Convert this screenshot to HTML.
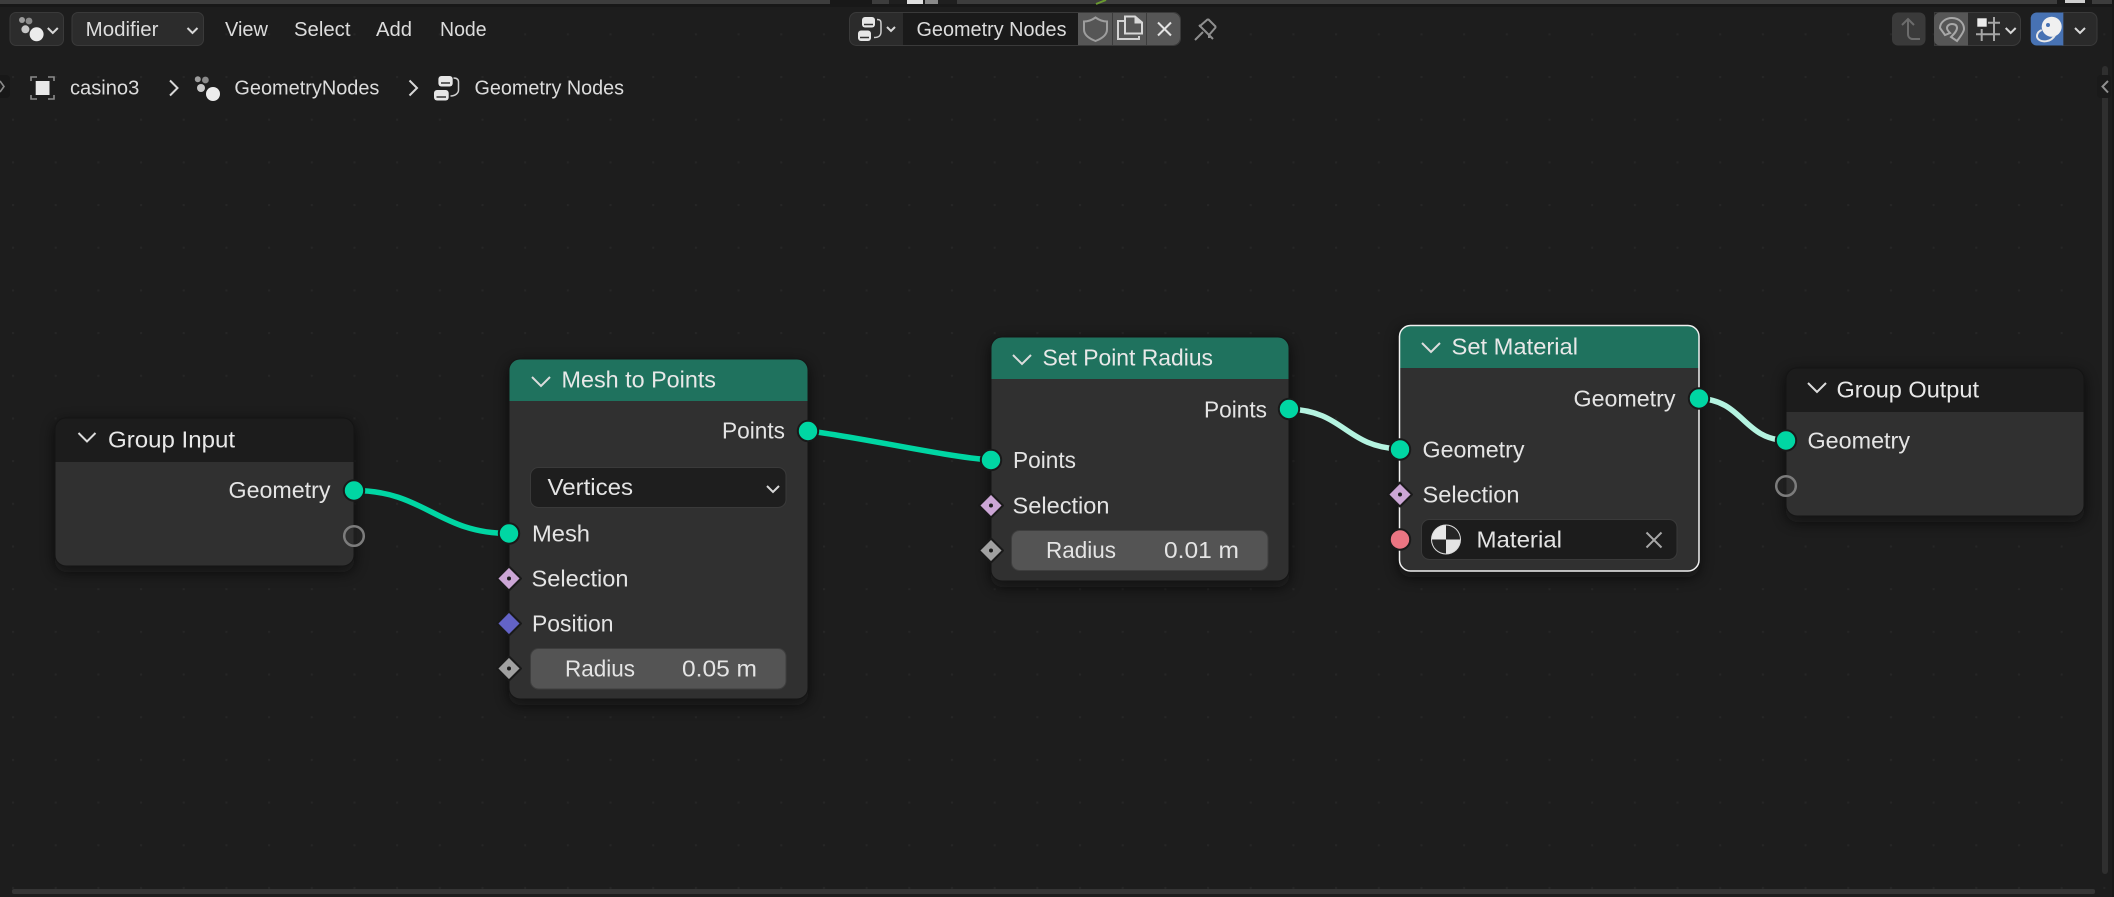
<!DOCTYPE html>
<html><head><meta charset="utf-8"><style>
html,body{margin:0;padding:0;background:#1d1d1d;width:2114px;height:897px;overflow:hidden}
svg{display:block}
text{font-family:"Liberation Sans",sans-serif;fill:#e4e4e4}
.n{font-size:23px}
.t{font-size:23px;fill:#e8e8e8}
.g{font-size:20px;fill:#dcdcdc}
.h{fill:none;stroke:#dcdcdc;stroke-width:2}
.s{fill:#00d6a3;stroke:#191919;stroke-width:2}
.r{fill:#303030;fill-opacity:.35;stroke:#7c7c7c;stroke-width:2.5}
.d{stroke:#191919;stroke-width:2;stroke-linejoin:round}
.i{fill:none;stroke:#d8d8d8;stroke-width:2}
</style></head><body>
<svg width="2114" height="897" viewBox="0 0 2114 897" xmlns="http://www.w3.org/2000/svg">
<defs>
<pattern id="dots" x="12" y="76" width="42.68" height="42.68" patternUnits="userSpaceOnUse"><rect width="2" height="2" fill="#262626"/></pattern>
<filter id="sh" x="-20%" y="-20%" width="140%" height="140%"><feGaussianBlur stdDeviation="7"/></filter>
<clipPath id="c1"><rect x="55" y="418" width="299" height="148" rx="11"/></clipPath>
<clipPath id="c2"><rect x="509" y="359" width="299" height="340" rx="11"/></clipPath>
<clipPath id="c3"><rect x="991" y="337" width="298" height="244" rx="11"/></clipPath>
<clipPath id="c4"><rect x="1399" y="325" width="300" height="246" rx="11"/></clipPath>
<clipPath id="c5"><rect x="1786" y="368" width="298" height="148" rx="11"/></clipPath>
<clipPath id="mat"><circle cx="1446" cy="539.5" r="14"/></clipPath>
</defs>
<rect width="2114" height="897" fill="#1d1d1d"/>
<rect width="2114" height="897" fill="url(#dots)"/>
<!-- top strip -->
<rect x="0" y="0" width="2114" height="4" fill="#3d3d3d"/>
<rect x="0" y="4" width="2114" height="3" fill="#181818"/>
<rect x="830" y="0" width="42" height="4" fill="#181818"/>
<rect x="889" y="0" width="68" height="4" fill="#1f1f1f"/>
<rect x="907" y="0" width="16" height="4" fill="#e0e0e0"/>
<rect x="925" y="0" width="13" height="4" fill="#8a8a8a"/>
<path d="M1096 4 L1106 0" stroke="#6a9a30" stroke-width="2"/>
<rect x="2057" y="0" width="35" height="4" fill="#1a1a1a"/>
<rect x="2065" y="0" width="20" height="3" fill="#cfcfcf"/>
<rect x="2112" y="0" width="2" height="897" fill="#181818"/>
<!-- header left -->
<rect x="10" y="12.5" width="53.500" height="33" rx="6" fill="#2c2c2c" stroke="#3a3a3a"/>
<circle cx="29" cy="21" r="3.400" fill="#8a8a8a"/><circle cx="22" cy="20" r="3" fill="#9c9c9c"/><circle cx="25.400" cy="29.300" r="4" fill="#c8c8c8"/><circle cx="36.600" cy="34.300" r="7" fill="#ececec"/>
<path d="M47.800 28l5 5 5-5" class="i"/>
<rect x="72" y="12.5" width="131.500" height="33" rx="6" fill="#2c2c2c" stroke="#3a3a3a"/>
<text class="g" x="85.700" y="36" textLength="72.800" lengthAdjust="spacingAndGlyphs">Modifier</text>
<path d="M187.500 28l5 5 5-5" class="i"/>
<text class="g" x="225" y="36" textLength="43" lengthAdjust="spacingAndGlyphs">View</text>
<text class="g" x="294" y="36" textLength="56.500" lengthAdjust="spacingAndGlyphs">Select</text>
<text class="g" x="376" y="36" textLength="36" lengthAdjust="spacingAndGlyphs">Add</text>
<text class="g" x="440" y="36" textLength="46.600" lengthAdjust="spacingAndGlyphs">Node</text>
<!-- center group -->
<rect x="849.5" y="12.5" width="331" height="33" rx="7" fill="#2b2b2b" stroke="#3a3a3a"/>
<rect x="903" y="13" width="175" height="32" fill="#1a1a1a"/>
<path d="M1078 13h95a7 7 0 0 1 7 7v18a7 7 0 0 1-7 7h-95z" fill="#565656"/>
<path d="M1112.5 13v32M1146.5 13v32" stroke="#3c3c3c" stroke-width="1"/>
<g fill="#e6e6e6"><rect x="862" y="17" width="13" height="10.5" rx="3"/><rect x="858" y="30.5" width="13" height="10.5" rx="3"/></g>
<path d="M864 24.5h9M860 37.5h9" stroke="#333" stroke-width="1.5"/>
<path d="M877 19.5c4 0 4 2 4 5v7c0 4-2 6-7 6" fill="none" stroke="#cfcfcf" stroke-width="1.5"/>
<path d="M887 27l4 4 4-4" class="i"/>
<text class="g" x="916.5" y="36" textLength="150" lengthAdjust="spacingAndGlyphs">Geometry Nodes</text>
<path d="M1084 21.5c4 0 8-1.500 11.500-4 3.500 2.500 7.500 4 11.500 4v8c0 5-5 9-11.500 11.500-6.500-2.500-11.500-6.500-11.500-11.500z" fill="none" stroke="#9e9e9e" stroke-width="2"/>
<path d="M1125 21h-7v18h21v-3" fill="none" stroke="#d2d2d2" stroke-width="2"/>
<path d="M1125 33.500v-17h10l7 6v11z" fill="none" stroke="#d8d8d8" stroke-width="2"/>
<path d="M1135 17v6h7" fill="#d8d8d8" stroke="#d8d8d8" stroke-width="1"/>
<path d="M1158 22.500l13 13M1171 22.500l-13 13" stroke="#e2e2e2" stroke-width="2"/>
<path d="M1195 40l8-8M1199 25l14 14M1208 19l8 8M1208 19l-8 7-1 0M1216 27l-7 8 0 3" fill="none" stroke="#8f8f8f" stroke-width="2"/>
<!-- header right -->
<rect x="1892" y="12.500" width="33.500" height="33" rx="6" fill="#3a3a3a"/>
<path d="M1902 25l6-6 6 6M1908 19v15c0 3 2 5 5 5h7" fill="none" stroke="#6c6c6c" stroke-width="2"/>
<path d="M1934.500 12.500h78a8 8 0 0 1 8 8v17a8 8 0 0 1-8 8h-78z" fill="#2a2a2a" stroke="#3a3a3a"/>
<path d="M1968 12.500h-28a6 6 0 0 0-6 6v21a6 6 0 0 0 6 6h28z" fill="#565656"/>
<path d="M1940 28C1940 22 1946 18 1952 18C1960 18 1964 24 1964 29C1964 32 1960 37 1957 41L1951 37C1954 34 1957 31 1957 28C1957 25 1955 24 1952 24C1949 24 1947 26 1947 28C1947 30 1950 33 1950 33L1945 35Z" fill="none" stroke="#a8a8a8" stroke-width="2"/>
<rect x="1977.300" y="18.300" width="9.400" height="8.400" fill="#ececec"/>
<path d="M1981.700 29v12M1994 17v24M1988 22.700h12M1976 34.300h24" stroke="#a6a6a6" stroke-width="2" fill="none"/>
<path d="M2005.700 28l5 5 5-5" class="i"/>
<path d="M2063 12.500h27a7 7 0 0 1 7 7v19a7 7 0 0 1-7 7h-27z" fill="#2a2a2a" stroke="#3a3a3a"/>
<path d="M2063.300 12.500h-26.600a6 6 0 0 0-6 6v21a6 6 0 0 0 6 6h26.600z" fill="#4772b3"/>
<circle cx="2051.700" cy="26.700" r="10" fill="#f0f0f0"/>
<circle cx="2048" cy="25" r="2" fill="#4772b3"/>
<path d="M2041.700 30c-5 2-6 7-3 9.500s12 3.500 16.500-4.500" fill="none" stroke="#e8e8e8" stroke-width="2"/>
<path d="M2075 28l5 5 5-5" class="i"/>
<!-- breadcrumbs -->
<rect x="-4" y="75" width="14" height="23" rx="4" fill="#181818"/>
<path d="M0 81l4 5.500-4 5.500" fill="none" stroke="#8a8a8a" stroke-width="1.600"/>
<path d="M31 81v-4h6M48 77h6v4M54 95v4h-6M37 99h-6v-4" fill="none" stroke="#8c8c8c" stroke-width="1.600"/>
<rect x="35.700" y="81" width="13.800" height="14" fill="#e8e8e8"/>
<text class="g" x="70" y="94.500" textLength="69.300" lengthAdjust="spacingAndGlyphs">casino3</text>
<path d="M170 80.500l7.500 7.500-7.500 7.500" class="i"/>
<circle cx="205.400" cy="80" r="3.400" fill="#8a8a8a"/><circle cx="197.800" cy="79.300" r="3" fill="#9c9c9c"/><circle cx="201" cy="88" r="4" fill="#c8c8c8"/><circle cx="213" cy="94" r="7" fill="#ececec"/>
<text class="g" x="234.400" y="94.500" textLength="145" lengthAdjust="spacingAndGlyphs">GeometryNodes</text>
<path d="M409.500 80.500l7.500 7.500-7.500 7.500" class="i"/>
<g fill="#e6e6e6"><rect x="438.400" y="76" width="14.300" height="10.500" rx="3"/><rect x="434" y="90" width="14.700" height="10.500" rx="3"/></g>
<path d="M441 83h9M436.500 97h9.500" stroke="#333" stroke-width="1.500"/>
<path d="M453.500 78c4 0 5 2 5 4v8c0 3-3 6-8 6" fill="none" stroke="#cfcfcf" stroke-width="1.500"/>
<text class="g" x="474.500" y="94.500" textLength="149.500" lengthAdjust="spacingAndGlyphs">Geometry Nodes</text>
<!-- scrollbars -->
<rect x="2102" y="66" width="6" height="808" rx="3" fill="#2f2f2f"/>
<rect x="12" y="889" width="2083" height="5" rx="2" fill="#353535"/>
<rect x="2097" y="75" width="14" height="23" rx="4" fill="#1a1a1a"/>
<path d="M2108 81l-5.500 5.500 5.500 6" fill="none" stroke="#8f8f8f" stroke-width="2"/>
<!-- shadows -->
<g fill="#0c0c0c" filter="url(#sh)" opacity=".7">
<rect x="55" y="422" width="299" height="150" rx="11"/>
<rect x="509" y="363" width="299" height="342" rx="11"/>
<rect x="991" y="341" width="298" height="246" rx="11"/>
<rect x="1399" y="329" width="300" height="248" rx="11"/>
<rect x="1786" y="372" width="298" height="150" rx="11"/>
</g>
<!-- Group Input -->
<g clip-path="url(#c1)"><rect x="55" y="418" width="299" height="148" fill="#303030"/><rect x="55" y="418" width="299" height="44" fill="#1c1c1c"/></g>
<rect x="55" y="418" width="299" height="148" rx="11" fill="none" stroke="#151515" stroke-width="1"/>
<path d="M78.500 433l8.500 8.500 8.500-8.500" class="h"/>
<text class="t" x="108" y="447.500" textLength="127" lengthAdjust="spacingAndGlyphs">Group Input</text>
<text class="n" x="228.500" y="498" textLength="102" lengthAdjust="spacingAndGlyphs">Geometry</text>
<!-- Mesh to Points -->
<g clip-path="url(#c2)"><rect x="509" y="359" width="299" height="340" fill="#303030"/><rect x="509" y="359" width="299" height="42" fill="#1f725e"/></g>
<rect x="509" y="359" width="299" height="340" rx="11" fill="none" stroke="#151515" stroke-width="1"/>
<path d="M532 377l9 9 9-9" class="h"/>
<text class="t" x="561.500" y="387.500" textLength="154.500" lengthAdjust="spacingAndGlyphs">Mesh to Points</text>
<text class="n" x="722" y="438.500" textLength="63" lengthAdjust="spacingAndGlyphs">Points</text>
<rect x="530.500" y="467.500" width="255.500" height="40" rx="8" fill="#1e1e1e" stroke="#3a3a3a"/>
<text class="n" x="547.500" y="495" textLength="85.500" lengthAdjust="spacingAndGlyphs">Vertices</text>
<path d="M767 486l6 6 6-6" class="i"/>
<text class="n" x="532" y="541.500" textLength="58" lengthAdjust="spacingAndGlyphs">Mesh</text>
<text class="n" x="531.500" y="586.500" textLength="97" lengthAdjust="spacingAndGlyphs">Selection</text>
<text class="n" x="532" y="631.500" textLength="81.500" lengthAdjust="spacingAndGlyphs">Position</text>
<rect x="530.500" y="648.500" width="255.500" height="40.500" rx="8" fill="#545454" stroke="#3e3e3e"/>
<text class="n" x="565" y="676.500" textLength="70" lengthAdjust="spacingAndGlyphs">Radius</text>
<text class="n" x="682" y="676.500" textLength="75" lengthAdjust="spacingAndGlyphs">0.05 m</text>
<!-- Set Point Radius -->
<g clip-path="url(#c3)"><rect x="991" y="337" width="298" height="244" fill="#303030"/><rect x="991" y="337" width="298" height="42" fill="#1f725e"/></g>
<rect x="991" y="337" width="298" height="244" rx="11" fill="none" stroke="#151515" stroke-width="1"/>
<path d="M1013 355l9 9 9-9" class="h"/>
<text class="t" x="1042.500" y="365.500" textLength="170.500" lengthAdjust="spacingAndGlyphs">Set Point Radius</text>
<text class="n" x="1204" y="417.500" textLength="63" lengthAdjust="spacingAndGlyphs">Points</text>
<text class="n" x="1013" y="468" textLength="63" lengthAdjust="spacingAndGlyphs">Points</text>
<text class="n" x="1012.500" y="513.500" textLength="97" lengthAdjust="spacingAndGlyphs">Selection</text>
<rect x="1011.500" y="530.500" width="256.500" height="40" rx="8" fill="#545454" stroke="#3e3e3e"/>
<text class="n" x="1046" y="558" textLength="70" lengthAdjust="spacingAndGlyphs">Radius</text>
<text class="n" x="1164" y="558" textLength="75" lengthAdjust="spacingAndGlyphs">0.01 m</text>
<!-- Set Material -->
<g clip-path="url(#c4)"><rect x="1399" y="325" width="300" height="246" fill="#303030"/><rect x="1399" y="325" width="300" height="43" fill="#1f725e"/></g>
<rect x="1399.500" y="325.500" width="299.500" height="245.500" rx="11" fill="none" stroke="#f0f0f0" stroke-width="1.500"/>
<path d="M1422 343l9 9 9-9" class="h"/>
<text class="t" x="1451.500" y="354.500" textLength="126.500" lengthAdjust="spacingAndGlyphs">Set Material</text>
<text class="n" x="1573.500" y="406.500" textLength="102" lengthAdjust="spacingAndGlyphs">Geometry</text>
<text class="n" x="1422.500" y="457.500" textLength="102" lengthAdjust="spacingAndGlyphs">Geometry</text>
<text class="n" x="1422.500" y="502.500" textLength="97" lengthAdjust="spacingAndGlyphs">Selection</text>
<rect x="1421.500" y="519.500" width="255.500" height="40" rx="8" fill="#1c1c1c" stroke="#3a3a3a"/>
<circle cx="1446" cy="539.500" r="15" fill="#dcdcdc"/>
<g clip-path="url(#mat)"><rect x="1432" y="525" width="14" height="14.500" fill="#e8e8e8"/><rect x="1446" y="525" width="14" height="14.500" fill="#262626"/><rect x="1432" y="539.500" width="14" height="14.500" fill="#262626"/><rect x="1446" y="539.500" width="14" height="14.500" fill="#e4e4e4"/></g>
<text class="n" x="1476.500" y="547.500" textLength="85.500" lengthAdjust="spacingAndGlyphs">Material</text>
<path d="M1646.500 532.500l15 15M1661.500 532.500l-15 15" stroke="#a8a8a8" stroke-width="2"/>
<!-- Group Output -->
<g clip-path="url(#c5)"><rect x="1786" y="368" width="298" height="148" fill="#303030"/><rect x="1786" y="368" width="298" height="44" fill="#1c1c1c"/></g>
<rect x="1786" y="368" width="298" height="148" rx="11" fill="none" stroke="#151515" stroke-width="1"/>
<path d="M1808 383l9 9 9-9" class="h"/>
<text class="t" x="1836.500" y="397.500" textLength="142.500" lengthAdjust="spacingAndGlyphs">Group Output</text>
<text class="n" x="1807.500" y="448.500" textLength="102.500" lengthAdjust="spacingAndGlyphs">Geometry</text>
<!-- links -->
<g fill="none" stroke-width="5.500">
<path d="M354 490.500C425 490.500 438 533.500 509 533.500" stroke="#00d6a3"/>
<path d="M808 431C855 436 945 457 991 460" stroke="#00d6a3"/>
<path d="M1289 409C1345 411 1345 447 1400 449" stroke="#b4f3e0"/>
<path d="M1699 398.500C1743 400 1743 439 1786 440.500" stroke="#b4f3e0"/>
</g>
<!-- sockets -->
<circle class="s" cx="354" cy="490.500" r="10.200"/>
<circle class="r" cx="354" cy="536" r="9.800"/>
<circle class="s" cx="808" cy="431" r="10.200"/>
<circle class="s" cx="509" cy="533.500" r="10.200"/>
<path class="d" fill="#cca6d6" d="M509 566.500l12 12-12 12-12-12z"/><circle cx="509" cy="578.500" r="2" fill="#1c1c1c"/>
<path class="d" fill="#6363c7" d="M509 611.500l12 12-12 12-12-12z"/>
<path class="d" fill="#a1a1a1" d="M509 656.500l12 12-12 12-12-12z"/><circle cx="509" cy="668.500" r="2" fill="#1c1c1c"/>
<circle class="s" cx="1289" cy="409" r="10.200"/>
<circle class="s" cx="991" cy="460" r="10.200"/>
<path class="d" fill="#cca6d6" d="M991 493.500l12 12-12 12-12-12z"/><circle cx="991" cy="505.500" r="2" fill="#1c1c1c"/>
<path class="d" fill="#a1a1a1" d="M991 538.500l12 12-12 12-12-12z"/><circle cx="991" cy="550.500" r="2" fill="#1c1c1c"/>
<circle class="s" cx="1699" cy="398.500" r="10.200"/>
<circle class="s" cx="1400" cy="449.500" r="10.200"/>
<path class="d" fill="#cca6d6" d="M1400 482.500l12 12-12 12-12-12z"/><circle cx="1400" cy="494.500" r="2" fill="#1c1c1c"/>
<circle cx="1400" cy="539.500" r="10.200" fill="#eb7582" stroke="#191919" stroke-width="2"/>
<circle class="s" cx="1786" cy="440.500" r="10.200"/>
<circle class="r" cx="1786" cy="486" r="9.800"/>
</svg>
</body></html>
